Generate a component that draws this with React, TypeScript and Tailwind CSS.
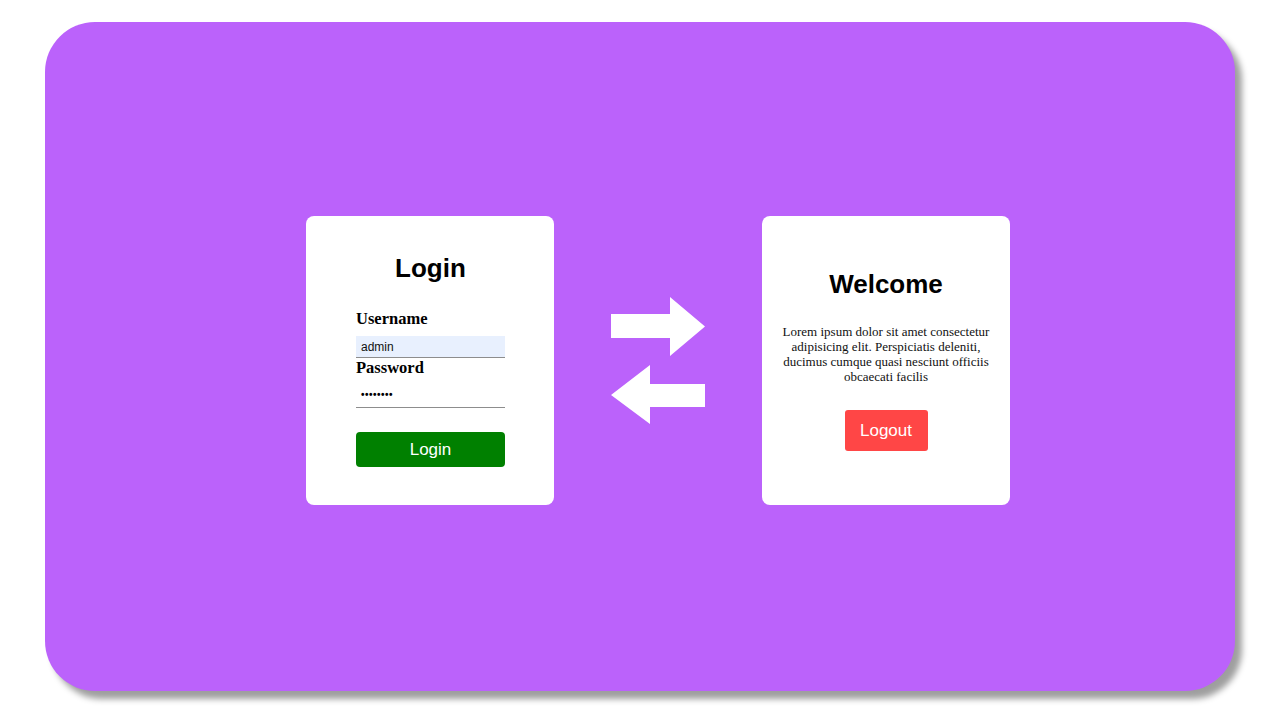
import React from "react";

function Arrows() {
  return (
    <svg width="94" height="128" viewBox="0 0 94 128" className="shrink-0">
      <polygon points="0,17 59,17 59,0 94,29.5 59,59 59,41 0,41" fill="#ffffff" />
      <polygon points="94,87 39,87 39,68 0,98 39,127 39,110 94,110" fill="#ffffff" />
    </svg>
  );
}

export default function App() {
  return (
    <div className="w-[1280px] h-[720px] bg-white overflow-hidden pt-[22px] pl-[45px]">
      <div className="w-[1190px] h-[669px] rounded-[50px] bg-[#bb62fb] shadow-[7px_8px_6px_rgba(0,0,0,0.38)] flex items-start pl-[261px] pt-[194px] gap-[57px]">
        {/* Login card */}
        <div className="w-[248px] h-[289px] bg-white rounded-[8px] flex flex-col pl-[50px] pr-[49px] pt-[37px]">
          <h1 className="text-center text-[26px] leading-[30px] font-bold text-black font-['Liberation_Sans',Arial,sans-serif]">
            Login
          </h1>
          <label className="mt-[27px] text-[16.5px] leading-[18px] font-bold text-black font-['Liberation_Serif','Times_New_Roman',serif]">
            Username
          </label>
          <div className="mt-[8px] h-[22px] bg-[#e8f0fe] border-b border-[#8d8d8d] flex items-center pl-[5px] text-[12px] text-[#111] font-['Liberation_Sans',Arial,sans-serif]">
            admin
          </div>
          <label className="mt-[1px] text-[16.5px] leading-[18px] font-bold text-black font-['Liberation_Serif','Times_New_Roman',serif]">
            Password
          </label>
          <div className="mt-[5px] h-[26px] border-b border-[#8d8d8d] flex items-center pl-[5px] text-[10px] font-bold tracking-[0.5px] text-black font-['Liberation_Sans',Arial,sans-serif]">
            ••••••••
          </div>
          <button className="mt-[24px] h-[35px] w-full bg-[#008000] rounded-[4px] text-white text-[17px] font-['Liberation_Sans',Arial,sans-serif]">
            Login
          </button>
        </div>

        <div className="pt-[81px]">
          <Arrows />
        </div>

        {/* Welcome card */}
        <div className="w-[248px] h-[289px] bg-white rounded-[8px] flex flex-col items-center pt-[53px]">
          <h1 className="text-center text-[26px] leading-[30px] font-bold text-black font-['Liberation_Sans',Arial,sans-serif]">
            Welcome
          </h1>
          <p className="mt-[25px] text-center text-[13px] leading-[15px] text-[#111] font-['Liberation_Serif','Times_New_Roman',serif]">
            Lorem ipsum dolor sit amet consectetur
            <br />
            adipisicing elit. Perspiciatis deleniti,
            <br />
            ducimus cumque quasi nesciunt officiis
            <br />
            obcaecati facilis
          </p>
          <button className="mt-[26px] w-[83px] h-[41px] bg-[#ff4646] rounded-[3px] text-white text-[17px] font-['Liberation_Sans',Arial,sans-serif]">
            Logout
          </button>
        </div>
      </div>
    </div>
  );
}
